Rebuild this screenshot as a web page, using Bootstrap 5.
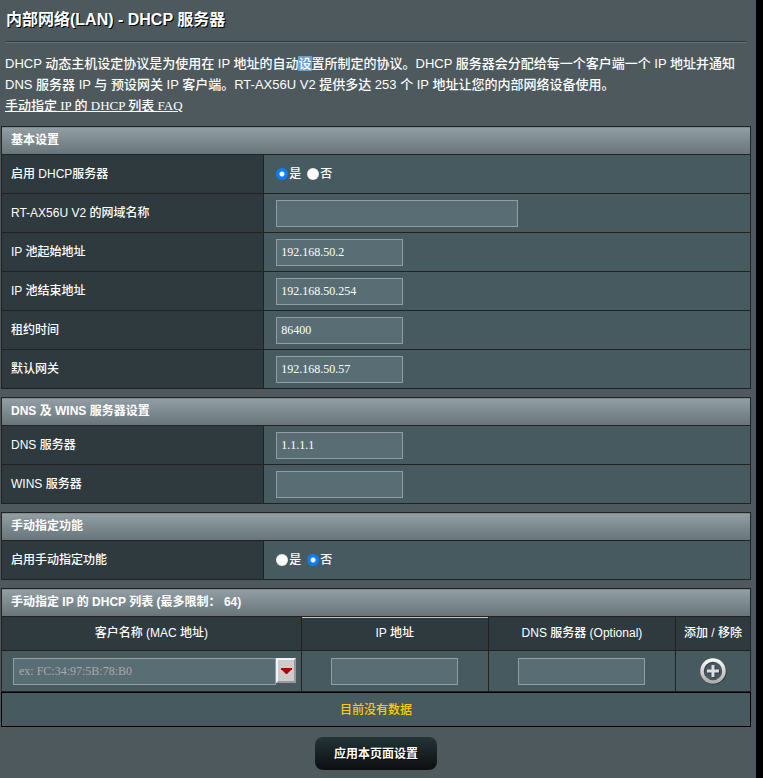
<!DOCTYPE html>
<html lang="zh-CN">
<head>
<meta charset="utf-8">
<meta name="viewport" content="width=device-width, initial-scale=1">
<title>内部网络(LAN) - DHCP 服务器</title>
<link rel="stylesheet" href="https://cdn.jsdelivr.net/npm/bootstrap@5.3.0/dist/css/bootstrap.min.css">
<style>
  :root {
    --ui: "Liberation Sans", Arial, "Noto Sans CJK SC", sans-serif;
    --serif: "Liberation Serif", "Times New Roman", "Noto Sans CJK SC", serif;
  }
  body { background: #000; color: #fff; font: 500 12px/18px var(--ui); }
  .panel { margin-right: 7px; padding: 10px 5px 8px 1px; background: #4d595d; }
  .page-title { font: 700 16px/20px var(--ui); margin: 0 5px 11px; text-shadow: 1px 1px 0 #000; }
  .rule { height: 2px; margin: 0 5px 10px; background: linear-gradient(#2f3b40 50%, #60757b 50%); }
  .intro { margin: 0 4px 10px; font-size: 13px; line-height: 21px; }
  .intro mark { padding: 0; color: #fff; background: #6e9ccb; }
  .faq { font-family: var(--serif); color: #fff; }
  .grid { width: 100%; border-collapse: collapse; table-layout: fixed; margin-bottom: 8px; }
  .grid th, .grid td { border: 1px solid #222; padding: 0 0 0 12px; font-weight: 500; background: #475a5f; }
  .grid .label-col { width: 35%; }
  .grid tbody tr { height: 39px; }
  .grid tbody th { background: #2f3a3e; padding-left: 9px; }
  .grid thead .bar { height: 28px; padding: 0 9px 2px; font-weight: 700; border-bottom-color: #222; background: linear-gradient(#929ea3, #67757b); }
  .list { margin: 0; }
  .list .heads th { height: 34px; padding: 0 0 2px; background: #2f3a3e; text-align: center; }
  .list .heads .sorted { box-shadow: inset 0 1px 0 #fc0; }
  .list tbody tr { height: 41px; }
  .list tbody td { padding: 0 3px 0 11px; }
  .list tbody .mid { padding: 0; text-align: center; }
  .field { display: inline-block; vertical-align: middle; width: 127px; height: 27px; padding: 0 4px; border: 1px solid #929ea1; border-radius: 0; background: #596d74; color: #fff; font: 12px/18px var(--serif); outline: 0; }
  .field:focus { border-color: #c5d0d3; }
  .field::placeholder { color: #a9a9a9; opacity: 1; }
  .field-wide { width: 242px; }
  .field-fill { flex: 0 1 263px; min-width: 0; padding: 0 5px; }
  .choice { appearance: none; width: 12px; height: 12px; margin: 0 1px 0 0; border-radius: 50%; background: #fff; box-shadow: inset 0 0 1px #888; }
  .choice:checked { background: radial-gradient(circle, #fff 0 2px, #0a7dff 3px); box-shadow: none; }
  .choice + label { margin-right: 6px; }
  .drop { width: 20px; height: 25px; padding: 2px 0 0; border: 2px solid; border-color: #f4f4f4 #999 #999 #f4f4f4; background: #ccc; line-height: 0; }
  .plus { padding: 0; border: 0; background: none; line-height: 0; }
  .empty { height: 35px; border: 1px solid #000; background: #475a5f; color: #fc0; font-family: var(--serif); }
  .apply { margin-top: 10px; min-width: 122px; height: 33px; padding: 0 18px; border: 0; border-radius: 8px; background: linear-gradient(#233438, #0d0e0f); color: #fff; font: 700 12px/18px var(--ui); text-shadow: 1px 1px 0 #000; }
</style>
<script src="https://cdn.jsdelivr.net/npm/bootstrap@5.3.0/dist/js/bootstrap.bundle.min.js"></script>
</head>
<body>
<main class="panel min-vh-100">
  <h1 class="page-title">内部网络(LAN) - DHCP 服务器</h1>
  <div class="rule"></div>
  <div class="intro">
    <p class="mb-0">DHCP 动态主机设定协议是为使用在 IP 地址的自动<mark>设</mark>置所制定的协议。DHCP 服务器会分配给每一个客户端一个 IP 地址并通知 DNS 服务器 IP 与 预设网关 IP 客户端。RT-AX56U V2 提供多达 253 个 IP 地址让您的内部网络设备使用。</p>
    <a class="faq d-inline-block" href="#faq">手动指定 IP 的 DHCP 列表 FAQ</a>
  </div>
  <form>
    <table class="grid">
      <colgroup><col class="label-col"><col></colgroup>
      <thead><tr><th class="bar" colspan="2">基本设置</th></tr></thead>
      <tbody>
        <tr><th scope="row">启用 DHCP服务器</th><td>
          <div class="d-flex align-items-center">
            <input class="choice" type="radio" name="dhcp" id="dhcpOn" checked><label for="dhcpOn">是</label>
            <input class="choice" type="radio" name="dhcp" id="dhcpOff"><label for="dhcpOff">否</label>
          </div></td></tr>
        <tr><th scope="row"><label for="domain">RT-AX56U V2 的网域名称</label></th><td><input class="field field-wide" id="domain" type="text"></td></tr>
        <tr><th scope="row"><label for="start">IP 池起始地址</label></th><td><input class="field" id="start" type="text" value="192.168.50.2"></td></tr>
        <tr><th scope="row"><label for="end">IP 池结束地址</label></th><td><input class="field" id="end" type="text" value="192.168.50.254"></td></tr>
        <tr><th scope="row"><label for="lease">租约时间</label></th><td><input class="field" id="lease" type="text" value="86400"></td></tr>
        <tr><th scope="row"><label for="gateway">默认网关</label></th><td><input class="field" id="gateway" type="text" value="192.168.50.57"></td></tr>
      </tbody>
    </table>
    <table class="grid">
      <colgroup><col class="label-col"><col></colgroup>
      <thead><tr><th class="bar" colspan="2">DNS 及 WINS 服务器设置</th></tr></thead>
      <tbody>
        <tr><th scope="row"><label for="dns">DNS 服务器</label></th><td><input class="field" id="dns" type="text" value="1.1.1.1"></td></tr>
        <tr><th scope="row"><label for="wins">WINS 服务器</label></th><td><input class="field" id="wins" type="text"></td></tr>
      </tbody>
    </table>
    <table class="grid">
      <colgroup><col class="label-col"><col></colgroup>
      <thead><tr><th class="bar" colspan="2">手动指定功能</th></tr></thead>
      <tbody>
        <tr><th scope="row">启用手动指定功能</th><td>
          <div class="d-flex align-items-center">
            <input class="choice" type="radio" name="manual" id="manualOn"><label for="manualOn">是</label>
            <input class="choice" type="radio" name="manual" id="manualOff" checked><label for="manualOff">否</label>
          </div></td></tr>
      </tbody>
    </table>
    <table class="grid list">
      <colgroup><col style="width:40%"><col style="width:25%"><col style="width:25%"><col style="width:10%"></colgroup>
      <thead>
        <tr><th class="bar" colspan="4">手动指定 IP 的 DHCP 列表 (最多限制： 64)</th></tr>
        <tr class="heads"><th scope="col">客户名称 (MAC 地址)</th><th scope="col" class="sorted">IP 地址</th><th scope="col">DNS 服务器 (Optional)</th><th scope="col">添加 / 移除</th></tr>
      </thead>
      <tbody>
        <tr>
          <td><div class="d-flex">
            <input class="field field-fill" type="text" aria-label="客户名称 (MAC 地址)" placeholder="ex: FC:34:97:5B:78:B0">
            <button class="drop flex-shrink-0" type="button" aria-label="选择客户端"><svg width="12" height="8" viewBox="0 0 12 8"><path d="M1 1h11v2h-1L7 7H6L2 3H1z" fill="#b00000"/></svg></button>
          </div></td>
          <td class="mid"><input class="field" type="text" aria-label="IP 地址"></td>
          <td class="mid"><input class="field" type="text" aria-label="DNS 服务器 (Optional)"></td>
          <td class="mid"><button class="plus" type="button" aria-label="添加">
            <svg width="28" height="28" viewBox="0 0 28 28">
              <defs><linearGradient id="metal" x1="0" y1="1" x2="0" y2="27" gradientUnits="userSpaceOnUse"><stop offset="0" stop-color="#fff"/><stop offset="1" stop-color="#a8a8a8"/></linearGradient></defs>
              <g fill="none" stroke="#1f292c" stroke-opacity=".65" stroke-width="3" transform="translate(1 1)"><circle cx="14" cy="14" r="11"/><path d="M14 8v12M8 14h12"/></g>
              <circle cx="14" cy="14" r="11" fill="none" stroke="url(#metal)" stroke-width="3.500"/>
              <path d="M12.500 8h3v4.500H20v3h-4.500V20h-3v-4.500H8v-3h4.500z" fill="#dedede"/>
            </svg></button></td>
        </tr>
      </tbody>
    </table>
    <div class="empty d-flex align-items-center justify-content-center">目前没有数据</div>
    <div class="text-center"><button class="apply" type="submit">应用本页面设置</button></div>
  </form>
</main>
</body>
</html>
